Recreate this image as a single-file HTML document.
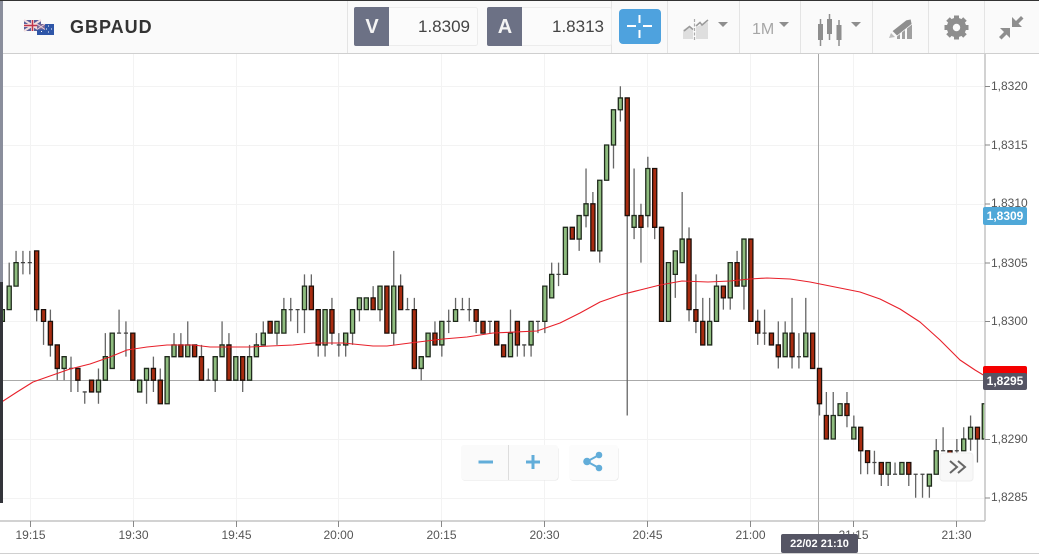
<!DOCTYPE html>
<html><head><meta charset="utf-8"><style>
html,body{margin:0;padding:0;background:#fff}
#r{position:relative;width:1039px;height:554px;overflow:hidden;font-family:"Liberation Sans",sans-serif;background:#fff}
svg{position:absolute;left:0;top:0}
.pn{stroke-width:1.3;vector-effect:non-scaling-stroke}
</style></head><body><div id="r">
<svg width="1039" height="554" viewBox="0 0 1039 554">
<defs><clipPath id="c"><rect x="0" y="54" width="985" height="467"/></clipPath></defs>
<!-- grid -->
<path d="M3 86.5H985M3 145.5H985M3 204.5H985M3 263.5H985M3 321.5H985M3 439.5H985M3 498.5H985M30.5 54V521M133.5 54V521M236.5 54V521M338.5 54V521M441.5 54V521M544.5 54V521M647.5 54V521M750.5 54V521M853.5 54V521M956.5 54V521" stroke="#f3f3f3" fill="none"/>
<path d="M0 380.5H985" stroke="#aaa" fill="none"/>
<path d="M818.5 54V534" stroke="#a8a8a8" fill="none"/>
<g clip-path="url(#c)"><g transform="translate(29.8,439) scale(6.867,-11.76)">
<path class="pn" fill="none" stroke="#666" d="M-3 15V11M-2 16V13M-1 16V14M0 16V14M1 16V10M2 11V8M3 11V7M4 8V5M5 7V5M6 7V4M7 6V4M8 4V3M10 6V3M11 9V5M13 11V9M14 10V7M17 6V3M18 7V4M19 6V3M21 9V7M22 9V7M23 10V7M25 8V5M26 6V5M27 7V4M28 10V7M29 9V5M31 7V4M32 8V5M33 9V7M34 10V8M36 10V8M37 12V9M38 12V10M39 11V9M40 14V9M41 14V11M42 11V7M43 11V7M44 12V8M45 9V7M46 9V7M47 11V8M48 12V10M50 13V11M51 13V10M53 16V8M54 14V11M55 12V11M56 12V6M57 7V5M59 10V8M60 10V7M61 11V9M62 12V10M63 12V11M64 12V10M65 11V9M67 10V9M70 11V7M71 10V7M72 8V7M73 10V7M74 10V9M75 13V9M76 15V12M77 15V13M80 19V16M81 23V18M82 21V16M83 22V15M85 28V23M86 30V27M87 29V2M88 23V17M89 20V15M90 24V18M91 23V17M94 16V12M95 21V15M96 18V10M97 14V9M98 12V8M99 12V8M100 14V10M101 13V11M102 15V11M103 16V13M104 17V11M106 11V8M107 11V8M109 10V6M110 10V7M111 12V6M112 9V6M113 12V7M115 6V2M116 4V0M117 4V0M119 4V1M120 2V0M121 1V-3M122 -1V-3M123 -1V-3M124 -2V-4M125 -2V-4M126 -2V-3M128 -2V-4M129 -3V-5M130 -3V-5M131 -3V-5M132 0V-3M133 1V-1M135 0V-2M136 1V-1M137 2V-1M138 1V-2"/>
<path class="pn" fill="none" stroke="#444" d="M-1.3 15h.6M-.3 15h.6M5.7 6h.6M7.7 4h.6M12.7 9h.6M13.7 9h.6M25.7 5h.6M37.7 11h.6M38.7 11h.6M44.7 8h.6M54.7 11h.6M60.7 10h.6M62.7 11h.6M63.7 11h.6M66.7 10h.6M71.7 8h.6M73.7 10h.6M76.7 14h.6M106.7 9h.6M111.7 7h.6M122.7 -2h.6M125.7 -3h.6M128.7 -3h.6M129.7 -3h.6M132.7 -1h.6M134.7 -1h.6"/>
<path class="pn" fill="#8fbd7f" stroke="#1f2a1c" d="M-4.3 11h.6V10h-.6zM-3.3 13h.6V11h-.6zM-2.3 15h.6V13h-.6zM4.7 7h.6V6h-.6zM9.7 5h.6V4h-.6zM10.7 7h.6V5h-.6zM11.7 9h.6V6h-.6zM15.7 5h.6V4h-.6zM16.7 6h.6V5h-.6zM19.7 7h.6V3h-.6zM20.7 8h.6V7h-.6zM22.7 8h.6V7h-.6zM26.7 7h.6V5h-.6zM27.7 8h.6V7h-.6zM29.7 7h.6V5h-.6zM31.7 7h.6V5h-.6zM32.7 8h.6V7h-.6zM33.7 9h.6V8h-.6zM35.7 10h.6V9h-.6zM36.7 11h.6V9h-.6zM39.7 13h.6V11h-.6zM42.7 11h.6V8h-.6zM45.7 9h.6V8h-.6zM46.7 11h.6V9h-.6zM47.7 12h.6V11h-.6zM48.7 12h.6V11h-.6zM50.7 13h.6V11h-.6zM52.7 13h.6V9h-.6zM56.7 7h.6V6h-.6zM57.7 9h.6V7h-.6zM59.7 10h.6V8h-.6zM61.7 11h.6V10h-.6zM69.7 9h.6V7h-.6zM72.7 10h.6V8h-.6zM74.7 13h.6V10h-.6zM75.7 14h.6V12h-.6zM77.7 18h.6V14h-.6zM79.7 19h.6V17h-.6zM80.7 20h.6V19h-.6zM82.7 22h.6V16h-.6zM83.7 25h.6V22h-.6zM84.7 28h.6V25h-.6zM85.7 29h.6V28h-.6zM87.7 19h.6V18h-.6zM89.7 23h.6V19h-.6zM92.7 15h.6V10h-.6zM93.7 16h.6V14h-.6zM94.7 17h.6V15h-.6zM98.7 10h.6V8h-.6zM99.7 13h.6V10h-.6zM101.7 15h.6V12h-.6zM103.7 17h.6V13h-.6zM109.7 9h.6V7h-.6zM112.7 9h.6V7h-.6zM116.7 2h.6V0h-.6zM117.7 3h.6V2h-.6zM119.7 1h.6V0h-.6zM124.7 -2h.6V-3h-.6zM126.7 -2h.6V-3h-.6zM130.7 -3h.6V-4h-.6zM131.7 -1h.6V-3h-.6zM135.7 0h.6V-1h-.6zM136.7 1h.6V0h-.6zM138.7 3h.6V0h-.6z"/>
<path class="pn" fill="#a82c10" stroke="#1c0f0a" d="M.7 16h.6V11h-.6zM1.7 11h.6V10h-.6zM2.7 10h.6V8h-.6zM3.7 8h.6V6h-.6zM6.7 6h.6V5h-.6zM8.7 5h.6V4h-.6zM14.7 9h.6V5h-.6zM17.7 6h.6V5h-.6zM18.7 5h.6V3h-.6zM21.7 8h.6V7h-.6zM23.7 8h.6V7h-.6zM24.7 7h.6V5h-.6zM28.7 8h.6V5h-.6zM30.7 7h.6V5h-.6zM34.7 10h.6V9h-.6zM40.7 13h.6V11h-.6zM41.7 11h.6V8h-.6zM43.7 11h.6V9h-.6zM49.7 12h.6V11h-.6zM51.7 13h.6V9h-.6zM53.7 13h.6V11h-.6zM55.7 11h.6V6h-.6zM58.7 9h.6V8h-.6zM64.7 11h.6V10h-.6zM65.7 10h.6V9h-.6zM67.7 10h.6V8h-.6zM68.7 8h.6V7h-.6zM70.7 10h.6V8h-.6zM78.7 18h.6V17h-.6zM81.7 20h.6V16h-.6zM86.7 29h.6V19h-.6zM88.7 19h.6V18h-.6zM90.7 23h.6V18h-.6zM91.7 18h.6V10h-.6zM95.7 17h.6V11h-.6zM96.7 11h.6V10h-.6zM97.7 10h.6V8h-.6zM100.7 13h.6V12h-.6zM102.7 15h.6V13h-.6zM104.7 17h.6V10h-.6zM105.7 10h.6V9h-.6zM107.7 9h.6V8h-.6zM108.7 8h.6V7h-.6zM110.7 9h.6V7h-.6zM113.7 9h.6V6h-.6zM114.7 6h.6V3h-.6zM115.7 2h.6V0h-.6zM118.7 3h.6V2h-.6zM120.7 1h.6V-1h-.6zM121.7 -1h.6V-2h-.6zM123.7 -2h.6V-3h-.6zM127.7 -2h.6V-3h-.6zM133.7 -1h.6V-2h-.6zM137.7 1h.6V0h-.6z"/>
</g>
<path d="M0 403L17 392L33 382L50 376L70 369L90 364L110 357L127 350L147 347L167 345L193 345L210 347L227 347L250 347L270 346L293 345L313 343L343 343L373 346L387 346L410 343L443 339L467 337L493 333L537 331L560 323L580 313L600 302L620 295L640 290L660 285L682 281L708 282L730 281L750 279L767 278L790 279L810 282L840 288L860 292L880 299L900 309L920 322L940 340L960 360L975 370L985 376" fill="none" stroke="#e8202a" stroke-width="1.1" stroke-linejoin="round"/>
</g>
<!-- axes -->
<path d="M985 54V521M0 521H985" stroke="#c4c4c4" stroke-width="1.5" fill="none"/>
<path d="M985 86.5H990M985 145H990M985 204H990M985 263H990M985 321.5H990M985 439.5H990M985 498H990M30.5 521V527M133.5 521V527M236.5 521V527M338.5 521V527M441.5 521V527M544.5 521V527M647.5 521V527M750.5 521V527M853.5 521V527M956.5 521V527" stroke="#888" fill="none"/>
<path d="M0 553.5H1039" stroke="#d0d0d0"/>
<g font-family="Liberation Sans" font-size="12" fill="#555">
<text x="991" y="90">1,8320</text><text x="991" y="149">1,8315</text><text x="991" y="207">1,8310</text><text x="991" y="267">1,8305</text><text x="991" y="325">1,8300</text><text x="991" y="443">1,8290</text><text x="991" y="501">1,8285</text>
<g text-anchor="middle"><text x="30.5" y="539">19:15</text><text x="133.5" y="539">19:30</text><text x="236.5" y="539">19:45</text><text x="338.5" y="539">20:00</text><text x="441.5" y="539">20:15</text><text x="544.5" y="539">20:30</text><text x="647.5" y="539">20:45</text><text x="750.5" y="539">21:00</text><text x="853.5" y="539">21:15</text><text x="956.5" y="539">21:30</text></g>
</g>
<!-- labels -->
<rect x="983" y="207" width="44" height="18" rx="2" fill="#4fa8d8"/>
<text x="1005" y="220" text-anchor="middle" font-family="Liberation Sans" font-size="12" font-weight="bold" fill="#fff">1,8309</text>
<rect x="983" y="366" width="44" height="14" rx="2" fill="#f40000"/>
<rect x="983" y="373" width="44" height="17" rx="2" fill="#555564"/>
<text x="1005" y="385" text-anchor="middle" font-family="Liberation Sans" font-size="12" font-weight="bold" fill="#fff">1,8295</text>
<rect x="781" y="534" width="77" height="19" rx="2" fill="#555564"/>
<text x="819.5" y="547" text-anchor="middle" font-family="Liberation Sans" font-size="11" font-weight="bold" fill="#fff">22/02 21:10</text>
<!-- zoom buttons -->
<g>
<rect x="461.5" y="446.5" width="97" height="34" rx="3" fill="#e4e4e4"/>
<rect x="461" y="445" width="97" height="35" rx="3" fill="#fafafa"/>
<path d="M508.5 445V480" stroke="#ddd"/>
<rect x="569.500" y="446.500" width="49" height="34" rx="3" fill="#e4e4e4"/>
<rect x="569" y="445" width="49" height="35" rx="3" fill="#fcfcfc"/>
<path d="M478.5 462H493M526 462H540M533 455V469" stroke="#62add9" stroke-width="3" fill="none"/>
<path d="M599 455L587 461.500L599 468" stroke="#62add9" stroke-width="2" fill="none"/>
<circle cx="599" cy="455" r="3.300" fill="#62add9"/><circle cx="599" cy="468" r="3.300" fill="#62add9"/><circle cx="587" cy="461.500" r="3.800" fill="#62add9"/>
<rect x="940" y="453" width="33" height="28" rx="3" fill="#f8f8f8" stroke="#eee"/>
<path d="M950 461L957 467L950 473M958 461L965 467L958 473" stroke="#666" stroke-width="2" fill="none"/>
</g>
<!-- header -->
<rect x="0" y="0" width="1039" height="53" fill="#fafafa"/>
<rect x="0" y="0" width="1039" height="1" fill="#333"/>
<path d="M0 53.500H1039" stroke="#cfcfcf"/>
<path d="M347.500 1V53M611.500 1V53M667.500 1V53M739.500 1V53M800.500 1V53M872.500 1V53M928.500 1V53M984.500 1V53" stroke="#e4e4e4" fill="none"/>
<!-- flags -->
<rect x="24" y="20" width="17" height="11" fill="#5a5f9a"/>
<path d="M24 20L41 31M41 20L24 31" stroke="#f2dfe0" stroke-width="2.200"/><path d="M32.500 20V31M24 25.500H41" stroke="#f2dfe0" stroke-width="3"/><path d="M32.500 20V31M24 25.500H41" stroke="#c0354a" stroke-width="1.500"/>
<rect x="37" y="24" width="17" height="11" fill="#2f56a8"/>
<rect x="37" y="24" width="8" height="5.500" fill="#7a6a9a"/>
<path d="M37 24L45 29.500M45 24L37 29.500" stroke="#eecfd5"/>
<path d="M41 31.500h1M48 26h1M51 29h1M48 32h1M46 29h1" stroke="#fff"/>
<text x="70" y="33" font-family="Liberation Sans" font-size="18" font-weight="bold" fill="#333" letter-spacing="1">GBPAUD</text>
<!-- V/A boxes -->
<rect x="354.500" y="7.500" width="123" height="38" rx="2" fill="#fbfbfb" stroke="#ececec"/>
<path d="M356 7h33v39h-33a2 2 0 0 1-2-2v-35a2 2 0 0 1 2-2z" fill="#6c7185"/>
<text x="372" y="33" text-anchor="middle" font-family="Liberation Sans" font-size="20" font-weight="bold" fill="#f4f4f4">V</text>
<text x="470" y="32" text-anchor="end" font-family="Liberation Sans" font-size="17" fill="#444">1.8309</text>
<rect x="487.500" y="7.500" width="124" height="38" rx="2" fill="#fbfbfb" stroke="#ececec"/>
<path d="M489 7h33v39h-33a2 2 0 0 1-2-2v-35a2 2 0 0 1 2-2z" fill="#6c7185"/>
<text x="505" y="33" text-anchor="middle" font-family="Liberation Sans" font-size="20" font-weight="bold" fill="#f4f4f4">A</text>
<text x="604" y="32" text-anchor="end" font-family="Liberation Sans" font-size="17" fill="#444">1.8313</text>
<!-- crosshair -->
<rect x="619" y="9" width="42" height="35" rx="4" fill="#4ea2de"/>
<path d="M627 26H636M643 26H652M639.500 15V23M639.500 30V38" stroke="#fff" stroke-width="2" fill="none"/>
<!-- chart type icon -->
<path d="M683 39V30L689 26L693 29V39zM696 39V27L708 22V39z" fill="#dedede"/>
<path d="M684 31L689.500 26.500L693 29.500M696 26L700 22.500L702 25L708 20" stroke="#9a9a9a" stroke-width="1.500" fill="none"/>
<path d="M694.500 19V40" stroke="#aaa" stroke-width="1.200" stroke-dasharray="3 1.500"/>
<path d="M718 22h10l-5 5z" fill="#8e8e8e"/>
<text x="752" y="34" font-family="Liberation Sans" font-size="16" fill="#a6a6a6">1M</text>
<path d="M779 22h10l-5 5z" fill="#8e8e8e"/>
<!-- candles icon -->
<path d="M820.500 19V46M829.500 14V40M839 20V46" stroke="#8e8e8e" stroke-width="1.500"/>
<rect x="818" y="24" width="5" height="16" fill="#8e8e8e"/><rect x="827" y="19" width="5" height="15" fill="#8e8e8e"/><rect x="836.500" y="25" width="5" height="15" fill="#8e8e8e"/>
<path d="M851 22h10l-5 5z" fill="#8e8e8e"/>
<!-- draw icon -->
<path d="M897 39V36L900 34V39zM902 39V31L905 29V39zM907 39V27L912 24V39z" fill="#a0a0a0"/>
<path d="M892 31L906 20L911 19L912 24L897 36z" fill="#8e8e8e" stroke="#fafafa" stroke-width=".8"/>
<path d="M891 33L895 37L889 38z" fill="#bcbcbc"/>
<!-- gear -->
<g transform="translate(956.500,27.500)" fill="#8e8e8e">
<circle r="6.700" fill="none" stroke="#8e8e8e" stroke-width="6"/>
<path d="M-2.500-12h5v4h-5zM-2.500 8h5v4h-5zM-12-2.500h4v5h-4zM8-2.500h4v5h-4z"/>
<path d="M-2.500-12h5v4h-5zM-2.500 8h5v4h-5zM-12-2.500h4v5h-4zM8-2.500h4v5h-4z" transform="rotate(45)"/>
</g>
<!-- compress -->
<path d="M1012 17V27H1022L1018.500 23.500L1023.500 18.500L1021 16L1016 21zM1010 28V38L1006.500 34.500L1001.500 39.500L999 37L1004 32L1000 28z" fill="#8e8e8e"/>
<!-- left bar -->
<rect x="0" y="1" width="3" height="281" fill="#8a8e9c"/>
<rect x="0" y="282" width="3" height="221" fill="#33343a"/>
</svg>
</div></body></html>
